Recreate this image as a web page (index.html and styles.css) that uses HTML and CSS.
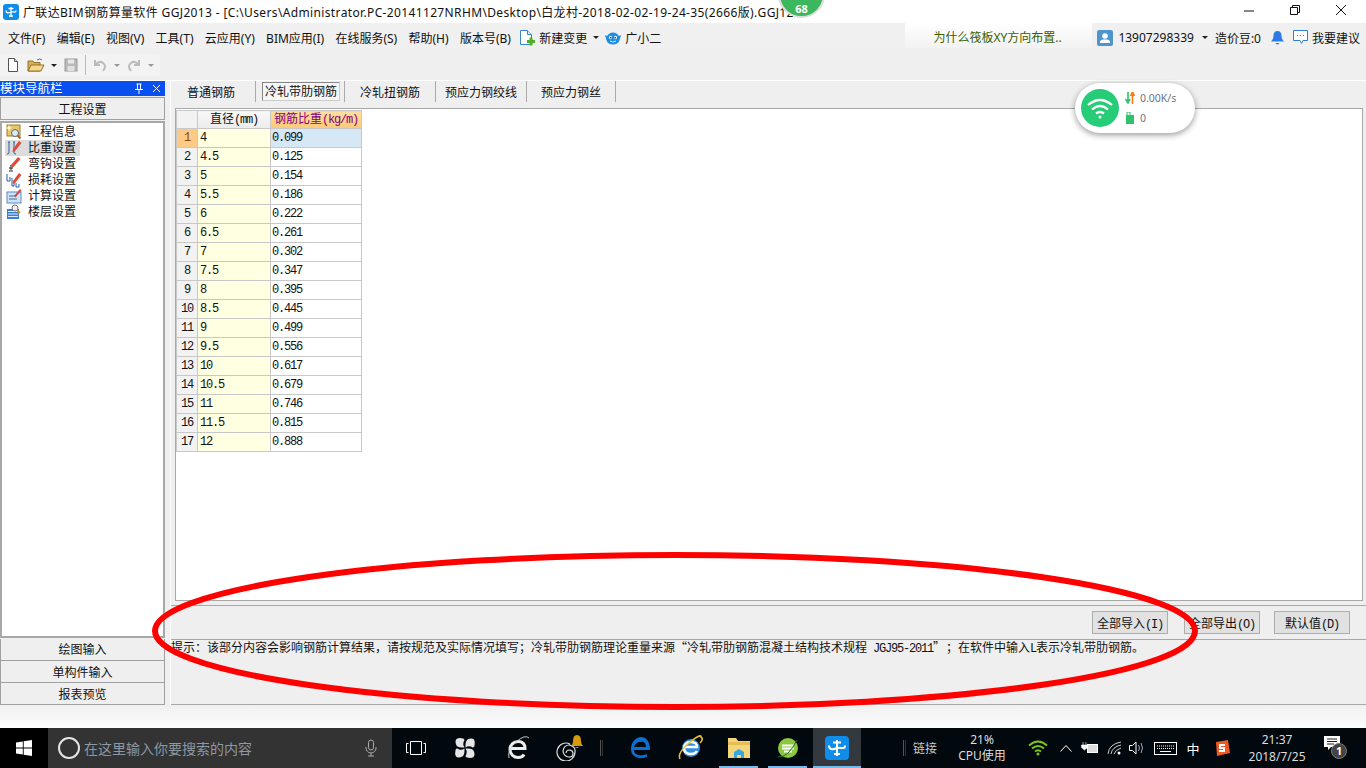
FILE: index.html
```html
<!DOCTYPE html>
<html lang="zh-CN">
<head>
    <meta charset="UTF-8">
    <meta name="viewport" content="width=device-width, initial-scale=1.0">
    <title>广联达BIM钢筋算量软件 GGJ2013</title>
    <link rel="stylesheet" href="styles.css">
</head>
<body>
    <div class="titlebar">
        <svg class="app-icon" width="16" height="16" viewBox="0 0 16 16"><rect width="16" height="16" rx="3" fill="#0f8de8"/><path d="M8 3v10M3 6.500c0 3 3 2.500 5 1.500s5 1.500 5-1.500M5.500 4.500h5M6 12h4" fill="none" stroke="#fff" stroke-width="1.300"/></svg>
        <div class="title-text">广联达BIM钢筋算量软件 GGJ2013 - [C:\Users\Administrator.PC-20141127NRHM\Desktop\白龙村-2018-02-02-19-24-35(2666版).GGJ12</div>
        <div class="window-btns">
            <svg width="46" height="23" viewBox="0 0 46 23"><path d="M18 11h10" stroke="#111"/></svg>
            <svg width="46" height="23" viewBox="0 0 46 23"><path d="M18.500 7.500h7v7h-7zM20.500 7.500v-2h7v7h-2" fill="none" stroke="#111"/></svg>
            <svg width="46" height="23" viewBox="0 0 46 23"><path d="M18 5l10 10M28 5L18 15" stroke="#111"/></svg>
        </div>
    </div>

    <div class="menubar">
        <div class="menu-left">
            <span class="menu-item">文件(F)</span>
            <span class="menu-item">编辑(E)</span>
            <span class="menu-item">视图(V)</span>
            <span class="menu-item">工具(T)</span>
            <span class="menu-item">云应用(Y)</span>
            <span class="menu-item">BIM应用(I)</span>
            <span class="menu-item">在线服务(S)</span>
            <span class="menu-item">帮助(H)</span>
            <span class="menu-item">版本号(B)</span>
            <svg class="menu-icon menu-icon-new" width="16" height="17" viewBox="0 0 16 17"><path d="M1.500 1.500h7l4 4v10h-11z" fill="#fff" stroke="#3b86c8"/><path d="M8.500 1.500v4h4" fill="#d5e8f8" stroke="#3b86c8"/><path d="M8 11h2.500V8.500h3V11H16v3h-2.500v2.500h-3V14H8z" fill="#4fae2b"/></svg>
            <span class="menu-label">新建变更</span>
            <span class="caret caret-new"></span>
            <svg class="menu-icon" width="16" height="16" viewBox="0 0 16 16"><path d="M0 5l2.200 1a6.500 6.500 0 0 1 11.600 0L16 5l-1.200 4.500a7 6.500 0 0 1-13.600 0z" fill="#1b8fe6"/><ellipse cx="5.500" cy="7.500" rx="1.500" ry="1.800" fill="#fff"/><ellipse cx="10.500" cy="7.500" rx="1.500" ry="1.800" fill="#fff"/><circle cx="5.800" cy="7.800" r=".8" fill="#123"/><circle cx="10.200" cy="7.800" r=".8" fill="#123"/><path d="M5 11q3 2 6 0" fill="none" stroke="#cdeafc"/></svg>
            <span class="menu-label">广小二</span>
        </div>
        <div class="menu-right">
            <div class="news">为什么筏板XY方向布置..</div>
            <svg class="user-icon" width="16" height="16" viewBox="0 0 16 16"><rect width="16" height="16" rx="2" fill="#4d96cd"/><circle cx="8" cy="6" r="2.800" fill="#fff"/><path d="M3 13v-1.500q0-1.500 3-2h4q3 .5 3 2V13z" fill="#fff"/></svg>
            <span class="user-phone">13907298339</span>
            <span class="caret caret-user"></span>
            <span class="beans">造价豆:0</span>
            <svg class="bell" width="13" height="16" viewBox="0 0 13 16"><path d="M6.500 1c2.500 0 4 2 4 4.500 0 3 1 4.500 2.500 6H0c1.500-1.500 2.500-3 2.500-6C2.500 3 4 1 6.500 1z" fill="#2a7be4"/><path d="M4.500 13h4q-2 3-4 0z" fill="#2a7be4"/></svg>
            <svg class="chat" width="17" height="17" viewBox="0 0 17 17"><path d="M1.500 1.500h14v10H11l-1.500 3-1.500-3H1.500z" fill="#fff" stroke="#2d7fd0"/><path d="M5 6.500h1M8 6.500h1M11 6.500h1" stroke="#2d7fd0"/></svg>
            <span class="advice">我要建议</span>
        </div>
    </div>

    <div class="toolbar">
        <div class="tool-group">
            <svg width="16" height="16" viewBox="0 0 16 16"><path d="M3.500 1.500h6l3 3v10h-9z" fill="#fff" stroke="#555"/><path d="M9.500 1.500v3h3" fill="#ddd" stroke="#555"/></svg>
            <svg width="18" height="16" viewBox="0 0 18 16"><path d="M1 4h5l1 1.500h6V14H1z" fill="#d9ae55" stroke="#94702a"/><path d="M1 14l3-6h13l-3 6z" fill="#f4d78c" stroke="#94702a"/><path d="M10 3q3-2 5 0" fill="none" stroke="#3b78c4"/></svg>
            <span class="caret caret-dark"></span>
            <svg width="16" height="16" viewBox="0 0 16 16"><rect x="2" y="2" width="12" height="12" fill="#b9b9b9" stroke="#9a9a9a"/><rect x="5" y="2.500" width="6" height="4" fill="#e8e8e8"/><rect x="4.500" y="9" width="7" height="5" fill="#e0e0e0"/></svg>
            <span class="tool-sep"></span>
            <svg width="16" height="16" viewBox="0 0 16 16"><path d="M3 3v5h5M3 8q4-5 8-2t0 8" fill="none" stroke="#bbb" stroke-width="2"/></svg>
            <span class="caret caret-gray"></span>
            <svg width="16" height="16" viewBox="0 0 16 16"><path d="M13 3v5H8M13 8Q9 3 5 6t0 8" fill="none" stroke="#bbb" stroke-width="2"/></svg>
            <span class="caret caret-gray"></span>
        </div>
    </div>

    <div class="main">
        <div class="nav-panel">
            <div class="nav-header">
                <span>模块导航栏</span>
                <span class="nav-header-btns">
                    <svg width="10" height="11" viewBox="0 0 10 11"><path d="M2.500 1h5M3.500 1v5M6.500 1v5M1 6.500h8M5 7v4" stroke="#fff" fill="none"/></svg>
                    <svg width="9" height="9" viewBox="0 0 9 9"><path d="M1 1l7 7M8 1L1 8" stroke="#fff"/></svg>
                </span>
            </div>
            <div class="nav-btn nav-btn-top">工程设置</div>
            <div class="nav-list">
                <div class="nav-item">
                    <svg width="16" height="16" viewBox="0 0 16 16"><rect x="1" y="1" width="13" height="11" fill="#e8c66c" stroke="#9a7c2c"/><path d="M3 1l1 2 2 1-2 1-1 2-1-2-2-1 2-1z" fill="#fff7c0"/><circle cx="9" cy="9" r="3.500" fill="#d8ecf8" stroke="#666"/><path d="M11.500 11.500l3 3" stroke="#a0641e" stroke-width="2"/></svg>
                    <span>工程信息</span>
                </div>
                <div class="nav-item selected">
                    <svg width="16" height="16" viewBox="0 0 16 16"><path d="M4 2h-2M3 2v11q0 1-2 1M7 2h2M8 2v11q0 1 2 1" fill="none" stroke="#2a5ca8"/><path d="M7 9l6-8 2.500 2-6.500 8-2.500 1z" fill="#e0483c"/></svg>
                    <span>比重设置</span>
                </div>
                <div class="nav-item">
                    <svg width="16" height="16" viewBox="0 0 16 16"><path d="M5 9v5M3 15h4M3 12h4" fill="none" stroke="#222"/><path d="M5 9l7-8 2.500 2-7 8-2.500 1z" fill="#e0483c"/></svg>
                    <span>弯钩设置</span>
                </div>
                <div class="nav-item">
                    <svg width="16" height="16" viewBox="0 0 16 16"><path d="M1 2v7h3V5M6 6v8h2v-3M10 11v4h3v-3" fill="none" stroke="#2a5ca8"/><path d="M7 9l6-8 2.500 2-6.500 8-2.500 1z" fill="#e0483c"/></svg>
                    <span>损耗设置</span>
                </div>
                <div class="nav-item">
                    <svg width="16" height="16" viewBox="0 0 16 16"><rect x="1" y="4" width="14" height="11" fill="#cfe3f6" stroke="#5a8ac0"/><path d="M3 8h6M3 11h8" stroke="#3a6ea8"/><path d="M8 8l6-7 1.500 1.500-6 7z" fill="#e0483c"/></svg>
                    <span>计算设置</span>
                </div>
                <div class="nav-item">
                    <svg width="16" height="16" viewBox="0 0 16 16"><path d="M1 5h12v10H1z" fill="#3f7fcf"/><path d="M2 7.500h10M2 10h10M2 12.500h10" stroke="#d8ecfa"/><circle cx="9" cy="4" r="3" fill="#e8f0f6" stroke="#777"/><path d="M11 6l3 3" stroke="#c89030" stroke-width="2"/></svg>
                    <span>楼层设置</span>
                </div>
            </div>
            <div class="nav-btn">绘图输入</div>
            <div class="nav-btn nav-btn-low">单构件输入</div>
            <div class="nav-btn nav-btn-low">报表预览</div>
        </div>

        <div class="content">
            <div class="tabs">
                <div class="tab tab-first">普通钢筋</div>
                <div class="tab tab-active"><span>冷轧带肋钢筋</span></div>
                <div class="tab tab-twist">冷轧扭钢筋</div>
                <div class="tab tab-strand">预应力钢绞线</div>
                <div class="tab tab-wire">预应力钢丝</div>
            </div>
            <div class="grid-box">
                <table class="grid">
                    <thead>
                        <tr><th class="row-no"></th><th class="col-dia">直径<span class="latin">(mm)</span></th><th class="col-weight">钢筋比重<span class="latin">(kg/m)</span></th></tr>
                    </thead>
                    <tbody>
                        <tr class="current"><td class="row-no">1</td><td class="dia">4</td><td class="weight">0.099</td></tr>
                        <tr><td class="row-no">2</td><td class="dia">4.5</td><td class="weight">0.125</td></tr>
                        <tr><td class="row-no">3</td><td class="dia">5</td><td class="weight">0.154</td></tr>
                        <tr><td class="row-no">4</td><td class="dia">5.5</td><td class="weight">0.186</td></tr>
                        <tr><td class="row-no">5</td><td class="dia">6</td><td class="weight">0.222</td></tr>
                        <tr><td class="row-no">6</td><td class="dia">6.5</td><td class="weight">0.261</td></tr>
                        <tr><td class="row-no">7</td><td class="dia">7</td><td class="weight">0.302</td></tr>
                        <tr><td class="row-no">8</td><td class="dia">7.5</td><td class="weight">0.347</td></tr>
                        <tr><td class="row-no">9</td><td class="dia">8</td><td class="weight">0.395</td></tr>
                        <tr><td class="row-no">10</td><td class="dia">8.5</td><td class="weight">0.445</td></tr>
                        <tr><td class="row-no">11</td><td class="dia">9</td><td class="weight">0.499</td></tr>
                        <tr><td class="row-no">12</td><td class="dia">9.5</td><td class="weight">0.556</td></tr>
                        <tr><td class="row-no">13</td><td class="dia">10</td><td class="weight">0.617</td></tr>
                        <tr><td class="row-no">14</td><td class="dia">10.5</td><td class="weight">0.679</td></tr>
                        <tr><td class="row-no">15</td><td class="dia">11</td><td class="weight">0.746</td></tr>
                        <tr><td class="row-no">16</td><td class="dia">11.5</td><td class="weight">0.815</td></tr>
                        <tr><td class="row-no">17</td><td class="dia">12</td><td class="weight">0.888</td></tr>
                    </tbody>
                </table>
            </div>
            <div class="action-row">
                <button class="action-btn">全部导入<span class="latin">(I)</span></button>
                <button class="action-btn">全部导出<span class="latin">(O)</span></button>
                <button class="action-btn action-default">默认值<span class="latin">(D)</span></button>
            </div>
            <div class="tip">提示：该部分内容会影响钢筋计算结果，请按规范及实际情况填写；冷轧带肋钢筋理论重量来源“冷轧带肋钢筋混凝土结构技术规程<span class="latin"> JGJ95-2011</span><span class="close-quote">”</span>；在软件中输入<span class="latin">L</span>表示冷轧带肋钢筋。</div>
        </div>
    </div>

    <div class="statusbar"></div>

    <div class="taskbar">
        <div class="start">
            <svg width="16" height="16" viewBox="0 0 16 16"><path d="M0 2.500l6.800-1v6H0zM7.700 1.300L16 0v7.500H7.700zM0 8.500h6.800v6l-6.800-1zM7.700 8.500H16V16l-8.300-1.300z" fill="#fff"/></svg>
        </div>
        <div class="search">
            <span class="cortana"></span>
            <span class="search-text">在这里输入你要搜索的内容</span>
            <svg class="mic" width="12" height="18" viewBox="0 0 12 18"><rect x="3.500" y="1" width="5" height="10" rx="2.500" fill="none" stroke="#aaa"/><path d="M1 8v1a5 5 0 0 0 10 0V8M6 14v3M3 17h6" fill="none" stroke="#aaa"/></svg>
        </div>
        <div class="task-icons">
            <span class="task task-view"><svg width="20" height="14" viewBox="0 0 20 14"><path d="M4.500.500h11v13h-11zM2.500 2.500H.500v9h2M17.500 2.500h2v9h-2" fill="none" stroke="#fff"/></svg></span>
            <span class="task task-fan"><svg width="22" height="22" viewBox="0 0 22 22"><g fill="#e6e6e6"><path d="M10.500 10.500C7 10.500 4 10.500 2.500 8.500Q.5 4 2.500 2Q5 .5 9 1.500Q11.500 2.500 9.500 5Q8.500 8 10.500 10.500z"/><path transform="rotate(90 11 11)" d="M10.500 10.500C7 10.500 4 10.500 2.500 8.500Q.5 4 2.500 2Q5 .5 9 1.500Q11.500 2.500 9.500 5Q8.500 8 10.500 10.500z"/><path transform="rotate(180 11 11)" d="M10.500 10.500C7 10.500 4 10.500 2.500 8.500Q.5 4 2.500 2Q5 .5 9 1.500Q11.500 2.500 9.500 5Q8.500 8 10.500 10.500z"/><path transform="rotate(270 11 11)" d="M10.500 10.500C7 10.500 4 10.500 2.500 8.500Q.5 4 2.500 2Q5 .5 9 1.500Q11.500 2.500 9.500 5Q8.500 8 10.500 10.500z"/></g></svg></span>
            <span class="task task-ie"><svg width="24" height="24" viewBox="0 0 24 24"><path d="M5 12.500h14c0-5-3-7-7-7s-8 3-8 8 4 8 8 8c3 0 5-1 6-3" fill="none" stroke="#eee" stroke-width="3"/><path d="M3 22Q1 14 10 6t13-4" fill="none" stroke="#ccc"/></svg></span>
            <span class="task task-swirl"><svg width="30" height="26" viewBox="0 0 30 26"><path d="M14 9a9 9 0 1 0 5 8 6 6 0 1 0-6 5 3.500 3.500 0 1 0-3-4" fill="none" stroke="#ddd" stroke-width="1.200"/><path d="M21 0q4 0 4 6 0 3 2 5H15q2-2 2-5 0-6 4-6z" fill="#d89a0c"/><path d="M19 12h4q-2 2-4 0z" fill="#d89a0c"/></svg></span>
            <span class="sep task-sep"></span>
            <span class="task"><svg width="22" height="24" viewBox="0 0 22 24"><path d="M2 11h14c0-5-3-6-6-5-3 0-5 2-6 5M4 14c0 5 6 7 13 4v3c-8 3-16 0-16-8C1 6 6 1 11 1s9 4 9 13H4z" fill="#0c6fd0"/></svg></span>
            <span class="task"><svg width="26" height="26" viewBox="0 0 26 26"><circle cx="14" cy="13" r="9" fill="#2f8ee0"/><path d="M8 12h12c0-3-2-5-6-5-5 0-7 3-7 6 0 4 3 6 7 6 3 0 5-1 6-3" fill="none" stroke="#fff" stroke-width="2.500"/><path d="M3 24Q0 18 12 8T24 2q3 2-1 6" fill="none" stroke="#e8c030" stroke-width="1.600"/></svg></span>
            <span class="task running"><svg width="24" height="22" viewBox="0 0 24 22"><path d="M1 1h8l2 3h12v17H1z" fill="#f4d67a"/><path d="M1 5h22v3H1z" fill="#e7bc50"/><path d="M7 21v-6l5-3 5 3v6h-3v-3h-4v3z" fill="#39a6e0"/></svg></span>
            <span class="task running"><svg width="24" height="24" viewBox="0 0 24 24"><circle cx="12" cy="12" r="10" fill="#8dc63f"/><path d="M6 9.500h12M6 12.500h12M8 15.500h8" stroke="#fff" stroke-width="2"/><path d="M2 21q10 1 19-17" fill="none" stroke="#1d6b2a"/></svg></span>
            <span class="task running active"><svg width="24" height="24" viewBox="0 0 24 24"><rect width="24" height="24" rx="4" fill="#0f8de8"/><path d="M12 4v16M4 9.500c0 5 5 4 8 2.500s8 2.500 8-2.500M8 6.500h8M9 18h6" fill="none" stroke="#fff" stroke-width="2"/></svg></span>
        </div>
        <div class="tray">
            <span class="sep"></span>
            <span class="tray-link">链接</span>
            <span class="cpu"><span>21%</span><span>CPU使用</span></span>
            <svg class="tray-wifi" width="20" height="16" viewBox="0 0 20 16"><path d="M1 5.500q9-8 18 0M4 8.500q6-5 12 0M7 11.500q3-2.500 6 0" fill="none" stroke="#7cc61a" stroke-width="2"/><circle cx="10" cy="14" r="1.500" fill="#7cc61a"/></svg>
            <svg class="tray-up" width="12" height="8" viewBox="0 0 12 8"><path d="M.5 7.500L6 1.500l5.500 6" fill="none" stroke="#fff"/></svg>
            <svg class="tray-power" width="18" height="12" viewBox="0 0 18 12"><path d="M2 0v3M5 0v3M.5 3h6v2.500L3.500 8 .5 5.500z" fill="#fff" stroke="#fff" stroke-width=".6"/><rect x="6.500" y="2.500" width="10" height="8" fill="#ddd" stroke="#fff"/></svg>
            <svg class="tray-net" width="16" height="14" viewBox="0 0 16 14"><path d="M1 13Q2 3 14 1M4 13q1-7 10-9M7 13q1-4 7-6" fill="none" stroke="#ccc"/><circle cx="12" cy="12" r="1.500" fill="#fff"/></svg>
            <svg class="tray-sound" width="16" height="14" viewBox="0 0 16 14"><path d="M.5 4.500h3l3.500-3.500v12l-3.500-3.500h-3z" fill="none" stroke="#fff"/><path d="M9.500 4q2 3 0 6M12 2q3 5 0 10" fill="none" stroke="#aaa"/></svg>
            <svg class="tray-kbd" width="23" height="13" viewBox="0 0 23 13"><rect x=".5" y=".5" width="22" height="12" fill="none" stroke="#fff"/><path d="M3 4h17M3 6.500h17" stroke="#fff" stroke-dasharray="1 1"/><path d="M6 9.500h11" stroke="#fff"/></svg>
            <span class="tray-ime">中</span>
            <svg class="tray-sogou" width="16" height="16" viewBox="0 0 16 16"><path d="M2 2l12-2 2 13-13 3z" fill="#ee5a24"/><path d="M11 5H6v3h4v3H5" fill="none" stroke="#fff" stroke-width="2"/></svg>
            <span class="clock"><span>21:37</span><span>2018/7/25</span></span>
            <span class="notify">
                <svg width="16" height="14" viewBox="0 0 16 14"><path d="M0 0h16v11H7l-3 3v-3H0z" fill="#fff"/><path d="M3 3h10M3 5.500h10M3 8h7" stroke="#222"/></svg>
                <span class="notify-count">1</span>
            </span>
        </div>
    </div>

    <!-- overlays -->
    <div class="score-badge">68</div>
    <div class="net-widget">
        <span class="net-circle">
            <svg width="26" height="21" viewBox="0 0 26 21"><path d="M1 7q12-10 24 0M5 11.500q8-7 16 0M9 15.500q4-3 8 0" fill="none" stroke="#fff" stroke-width="2.200"/><circle cx="13" cy="19" r="1.500" fill="#fff"/></svg>
        </span>
        <span class="net-info">
            <span class="net-line">
                <svg width="10" height="12" viewBox="0 0 10 12"><path d="M3 0v9M.5 7L3 11l2-4" fill="none" stroke="#2cc36b" stroke-width="1.600"/><path d="M7.500 12V2M5.500 4l2-4 2 4" fill="none" stroke="#f47c0e" stroke-width="1.600"/></svg>
                0.00K/s
            </span>
            <span class="net-line">
                <svg width="10" height="12" viewBox="0 0 10 12"><rect x="1" y="3" width="8" height="9" fill="#2cc36b"/><rect x="2" y="0" width="3" height="4" fill="none" stroke="#2cc36b"/></svg>
                0
            </span>
        </span>
    </div>
    <svg class="red-mark" width="1366" height="768" viewBox="0 0 1366 768"><ellipse cx="675" cy="631" rx="520" ry="76" fill="none" stroke="#ff0000" stroke-width="6"/></svg>
</body>
</html>
```

FILE: styles.css
```css
* {
    box-sizing: border-box;
}
html,
body {
    margin: 0;
    height: 768px;
    overflow: hidden;
}
body {
    position: relative;
    display: flex;
    flex-direction: column;
    width: 1366px;
    background-color: #f0f0f0;
    color: #111;
    font-family: "Noto Sans", "Noto Sans CJK SC", sans-serif;
    font-size: 12px;
}
.latin {
    font-family: "Liberation Mono", monospace;
    font-size: 12px;
    letter-spacing: -1.200px;
}
.titlebar {
    display: flex;
    align-items: center;
    height: 23px;
    padding-left: 3px;
    background-color: #fff;
    flex-shrink: 0;
}
.app-icon {
    margin-right: 4px;
}
.title-text {
    white-space: nowrap;
    overflow: hidden;
    width: 800px;
    letter-spacing: 0.36px;
}
.window-btns {
    display: flex;
    margin-left: auto;
    margin-right: 2px;
}
.menubar {
    display: flex;
    justify-content: space-between;
    height: 25px;
    flex-shrink: 0;
    padding-top: 4px;
    background-color: #f0f0f0;
}
.menu-left {
    display: flex;
    align-items: center;
    padding-left: 8px;
    white-space: nowrap;
}
.menu-item {
    margin-right: 11.300px;
}
.menu-icon {
    margin-right: 4px;
}
.menu-icon-new {
    margin-left: -3px;
}
.menu-label {
    margin-right: 6px;
}
.caret {
    display: inline-block;
    width: 0;
    height: 0;
    border-left: 3px solid transparent;
    border-right: 3px solid transparent;
    border-top: 3px solid #222;
}
.caret-new {
    margin-right: 6px;
}
.menu-right {
    display: flex;
    align-items: center;
    white-space: nowrap;
    padding-right: 6px;
}
.news {
    width: 187px;
    height: 25px;
    margin-top: -4px;
    padding: 5px 0 0 28px;
    margin-right: 5px;
    color: #3a6000;
    background: linear-gradient(#ffffff, #f2f2f2);
}
.user-phone {
    margin: 0 8px 0 5px;
}
.caret-user {
    margin-right: 7px;
}
.bell {
    margin: 0 8px 0 10px;
}
.chat {
    margin-right: 3px;
}
.toolbar {
    display: flex;
    align-items: flex-start;
    height: 33px;
    flex-shrink: 0;
    padding: 6px 0 0 0;
    background-color: #efefef;
    border-bottom: 1px solid #fff;
}
.tool-group {
    display: flex;
    align-items: center;
    gap: 6px;
    width: 160px;
    height: 22px;
    padding-left: 5px;
    background-color: #f3f3f3;
    border-radius: 3px;
}
.tool-sep {
    width: 1px;
    height: 20px;
    background-color: #bbb;
}
.caret-gray {
    border-top-color: #999;
}
.main {
    display: flex;
    flex: 1;
    min-height: 0;
    background-color: #f0f0f0;
}
.nav-panel {
    display: flex;
    flex-direction: column;
    width: 165px;
    flex-shrink: 0;
}
.nav-header {
    display: flex;
    justify-content: space-between;
    align-items: center;
    height: 15px;
    margin-bottom: 1px;
    background-color: #0a50f0;
    color: #fff;
    padding-right: 4px;
    line-height: 15px;
    font-size: 12.500px;
}
.nav-header-btns {
    display: flex;
    align-items: center;
    gap: 8px;
}
.nav-btn {
    height: 22px;
    line-height: 22px;
    text-align: center;
    background-color: #efefef;
    border: 1px solid #a0a0a0;
    border-top: 0;
}
.nav-btn-top {
    height: 23px;
    line-height: 23px;
    border-top: 1px solid #a0a0a0;
}
.nav-btn-low {
    line-height: 24px;
}
.nav-list {
    flex: 1;
    margin: 1px 0;
    padding: 1px 0 0 3px;
    background-color: #fff;
    border: 2px solid #a8a8a8;
}
.nav-item {
    display: flex;
    align-items: center;
    gap: 6px;
    width: 75px;
    height: 16px;
    padding-left: 1px;
    line-height: 16px;
    white-space: nowrap;
}
.nav-item.selected {
    background-color: #dcdcdc;
}
.content {
    display: flex;
    flex-direction: column;
    flex: 1;
    margin-left: 5px;
    border-left: 1px solid #fff;
    background-color: #efefef;
}
.tabs {
    display: flex;
    align-items: flex-start;
    height: 27px;
    flex-shrink: 0;
}
.tab {
    display: flex;
    align-items: center;
    justify-content: center;
    height: 21px;
    padding: 0 14px;
    border-right: 1px solid #aaa;
    white-space: nowrap;
}
.tab-first {
    padding: 0 20px 0 16px;
}
.tab-active {
    padding: 0 4px 0 6px;
}
.tab-active span {
    display: block;
    padding: 0 2px;
    border: 1px solid #888;
    border-right-color: #ccc;
    border-bottom-color: #ccc;
    background-color: #f6f6f6;
    line-height: 17px;
}
.tab-twist {
    padding: 0 15px;
}
.tab-strand {
    padding: 0 9px;
}
.tab-wire {
    padding: 0 14px;
}
.grid-box {
    height: 493px;
    flex-shrink: 0;
    margin: 0 3px 0 4px;
    background-color: #fff;
    border: 1px solid #a8a8a8;
    padding: 1px 1px 1px 0;
}
.grid {
    border-collapse: collapse;
    table-layout: fixed;
    width: 185px;
    font-family: "Liberation Mono", "Noto Sans CJK SC", monospace;
    font-size: 12px;
    letter-spacing: -1.200px;
}
.grid th,
.grid td {
    height: 19px;
    padding: 0;
    border: 1px solid #c8c8c8;
    font-weight: normal;
    white-space: nowrap;
}
.grid th {
    height: 18px;
    padding-bottom: 1px;
    background: linear-gradient(#f8f8f8, #ececec);
    text-align: center;
    font-family: "Noto Sans CJK SC", sans-serif;
    font-size: 12px;
    letter-spacing: 0;
    line-height: 14px;
}
.grid .row-no {
    width: 21px;
    text-align: center;
    background: #f2f2f2;
}
.col-dia {
    width: 73px;
}
.grid .col-weight {
    width: 91px;
    color: #800080;
    background: linear-gradient(#ffdf9f, #fdc878);
}
.grid .dia {
    padding-left: 2px;
    background-color: #ffffe1;
}
.grid .weight {
    padding-left: 1px;
}
.current .row-no {
    background: #fdca88;
    color: #8a4a00;
}
.current .weight {
    background-color: #d6e7f6;
}
.action-row {
    display: flex;
    justify-content: flex-end;
    gap: 16px;
    height: 35px;
    flex-shrink: 0;
    margin-top: 4px;
    padding: 5px 16px 0 0;
    border-top: 1px solid #a8a8a8;
    border-bottom: 1px solid #a8a8a8;
}
.action-btn {
    width: 76px;
    height: 23px;
    padding: 0;
    background-color: #e1e1e1;
    border: 1px solid #adadad;
    color: #111;
    font-family: "Noto Sans CJK SC", sans-serif;
    font-size: 12px;
}
.action-default {
    margin-left: -2px;
}
.tip {
    flex: 1;
    padding: 0;
    border-bottom: 1px solid #a8a8a8;
    font-family: "Noto Sans CJK SC", sans-serif;
    font-size: 12px;
    line-height: 14px;
    white-space: nowrap;
}
.close-quote {
    letter-spacing: 7px;
}
.statusbar {
    height: 23px;
    flex-shrink: 0;
    background: linear-gradient(#f0f0f0, #fdfdfd);
}
.taskbar {
    display: flex;
    align-items: stretch;
    height: 40px;
    flex-shrink: 0;
    background-color: #01090f;
    color: #ddd;
}
.start {
    display: flex;
    align-items: center;
    justify-content: center;
    width: 48px;
    background-color: #000;
}
.search {
    display: flex;
    align-items: center;
    width: 344px;
    padding: 0 15px 0 10px;
    background-color: #333;
    color: #8c98a2;
    font-size: 14px;
}
.cortana {
    width: 22px;
    height: 22px;
    margin-right: 4px;
    border: 2.500px solid #e4e4e4;
    border-radius: 50%;
}
.mic {
    margin-left: auto;
}
.task-icons {
    display: flex;
    align-items: stretch;
}
.task {
    position: relative;
    display: flex;
    align-items: center;
    justify-content: center;
    width: 49px;
}
.task-view {
    width: 48px;
}
.task-fan {
    width: 50px;
}
.task-ie {
    width: 56px;
}
.task-swirl {
    width: 50px;
}
.running::after {
    content: "";
    position: absolute;
    left: 5px;
    right: 5px;
    bottom: 0;
    height: 2px;
    background-color: #76b9ed;
}
.active {
    width: 48px;
    margin-left: 1px;
    background-color: #33393e;
}
.active::after {
    left: 0;
    right: 0;
}
.sep {
    align-self: center;
    width: 3px;
    height: 16px;
    margin: 0 6px;
    border-left: 1px solid #555;
    border-right: 1px solid #333;
}
.task-sep {
    margin: 0 13px 0 4px;
}
.tray {
    display: flex;
    align-items: center;
    flex: 1;
    padding-left: 36px;
    white-space: nowrap;
}
.tray-link {
    margin-left: 1px;
    color: #c8c8c8;
}
.cpu {
    display: flex;
    flex-direction: column;
    align-items: center;
    line-height: 16px;
    margin-left: 15px;
    width: 60px;
}
.tray-wifi {
    margin-left: 16px;
}
.tray-up {
    margin-left: 12px;
}
.tray-power {
    margin-left: 9px;
}
.tray-net {
    margin-left: 8px;
}
.tray-sound {
    margin-left: 6px;
}
.tray-kbd {
    margin-left: 8.500px;
}
.tray-ime {
    margin-left: 10px;
    font-size: 13px;
    color: #fff;
}
.tray-sogou {
    margin-left: 14.500px;
}
.clock {
    display: flex;
    flex-direction: column;
    align-items: center;
    line-height: 17px;
    margin-left: 12px;
    width: 70px;
}
.notify {
    position: relative;
    margin-left: 12px;
    margin-bottom: 6px;
}
.notify-count {
    position: absolute;
    left: 7px;
    top: 7px;
    width: 16px;
    height: 16px;
    border-radius: 50%;
    background-color: #444;
    border: 1px solid #777;
    color: #fff;
    text-align: center;
    font-size: 11px;
    font-weight: bold;
    line-height: 14px;
}
.score-badge {
    position: absolute;
    left: 778px;
    top: -29px;
    width: 47px;
    height: 47px;
    padding-top: 29px;
    border-radius: 50%;
    background: #3bb75e;
    border: 2px solid #dcdcdc;
    color: #fff;
    font-size: 11px;
    font-weight: bold;
    line-height: 14px;
    text-align: center;
}
.net-widget {
    position: absolute;
    left: 1075px;
    top: 83px;
    display: flex;
    align-items: center;
    gap: 6px;
    width: 120px;
    height: 50px;
    padding-left: 6px;
    border-radius: 25px;
    background-color: #fff;
    box-shadow: 0 2px 6px rgba(0, 0, 0, 0.4);
    color: #6b7480;
    font-size: 10.500px;
}
.net-circle {
    display: flex;
    align-items: center;
    justify-content: center;
    width: 38px;
    height: 38px;
    border-radius: 50%;
    background-color: #27cc76;
}
.net-info {
    display: flex;
    flex-direction: column;
    gap: 6px;
}
.net-line {
    display: flex;
    align-items: center;
    gap: 5px;
    line-height: 14px;
}
.red-mark {
    position: absolute;
    left: 0;
    top: 0;
    pointer-events: none;
}
```
